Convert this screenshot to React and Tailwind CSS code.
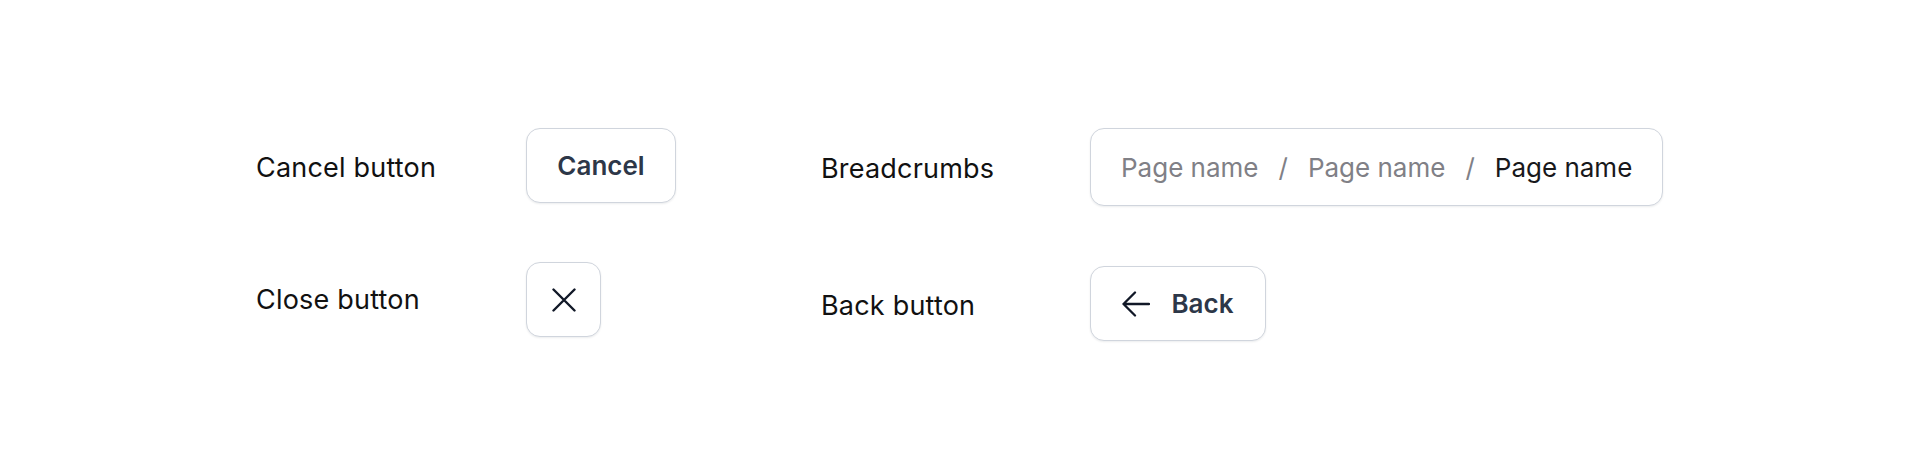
import React from "react";

function Row({ label, children, labelClass = "" }) {
  return (
    <div className="flex items-center">
      <div className={"shrink-0 text-[27px] tracking-[0.2px] leading-[40px] text-[#111111] " + labelClass}>
        {label}
      </div>
      {children}
    </div>
  );
}

function XIcon() {
  return (
    <svg width="24" height="24" viewBox="0 0 24 24" fill="none" stroke="#111827" strokeWidth="2.4" strokeLinecap="round">
      <path d="M1.5 1.5 22.5 22.5M22.5 1.5 1.5 22.5" />
    </svg>
  );
}

function ArrowLeft() {
  return (
    <svg width="28" height="26" viewBox="0 0 28 26" fill="none" stroke="#111827" strokeWidth="2.3" strokeLinecap="round" strokeLinejoin="round">
      <path d="M13 1.5 1.5 13 13 24.5M1.5 13H27" />
    </svg>
  );
}

export default function App() {
  return (
    <div
      className="w-[1920px] h-[450px] bg-white flex pt-[128px] pl-[256px]"
      style={{ fontFamily: "Inter, 'Noto Sans', sans-serif" }}
    >
      <div className="flex flex-col gap-[59px] w-[565px] shrink-0">
        <Row label="Cancel button" labelClass="w-[270px] mt-[5px]">
          <button className="h-[75px] w-[150px] rounded-[14px] border-[1.5px] border-[#d0d5dd] bg-white shadow-[0_1px_2px_rgba(16,24,40,0.08)] text-[26px] font-semibold text-[#2d3748] flex items-center justify-center">
            Cancel
          </button>
        </Row>
        <Row label="Close button" labelClass="w-[270px] mt-[1px]">
          <button className="h-[75px] w-[75px] rounded-[14px] border-[1.5px] border-[#d0d5dd] bg-white shadow-[0_1px_2px_rgba(16,24,40,0.08)] flex items-center justify-center">
            <XIcon />
          </button>
        </Row>
      </div>
      <div className="flex flex-col gap-[60px]">
        <Row label="Breadcrumbs" labelClass="w-[269px] mt-[4px]">
          <nav className="h-[78px] rounded-[14px] border-[1.5px] border-[#d0d5dd] bg-white shadow-[0_1px_2px_rgba(16,24,40,0.08)] px-[30px] flex items-center gap-[20px] text-[26px]">
            <span className="text-[#808086]">Page name</span>
            <span className="text-[#808086]">/</span>
            <span className="text-[#808086]">Page name</span>
            <span className="text-[#808086]">/</span>
            <span className="text-[#18181b]">Page name</span>
          </nav>
        </Row>
        <Row label="Back button" labelClass="w-[269px] mt-[5px]">
          <button className="h-[75px] w-[176px] rounded-[14px] border-[1.5px] border-[#d0d5dd] bg-white shadow-[0_1px_2px_rgba(16,24,40,0.08)] flex items-center justify-center gap-[21px] text-[26px] font-semibold text-[#2d3748]">
            <ArrowLeft />
            <span>Back</span>
          </button>
        </Row>
      </div>
    </div>
  );
}
